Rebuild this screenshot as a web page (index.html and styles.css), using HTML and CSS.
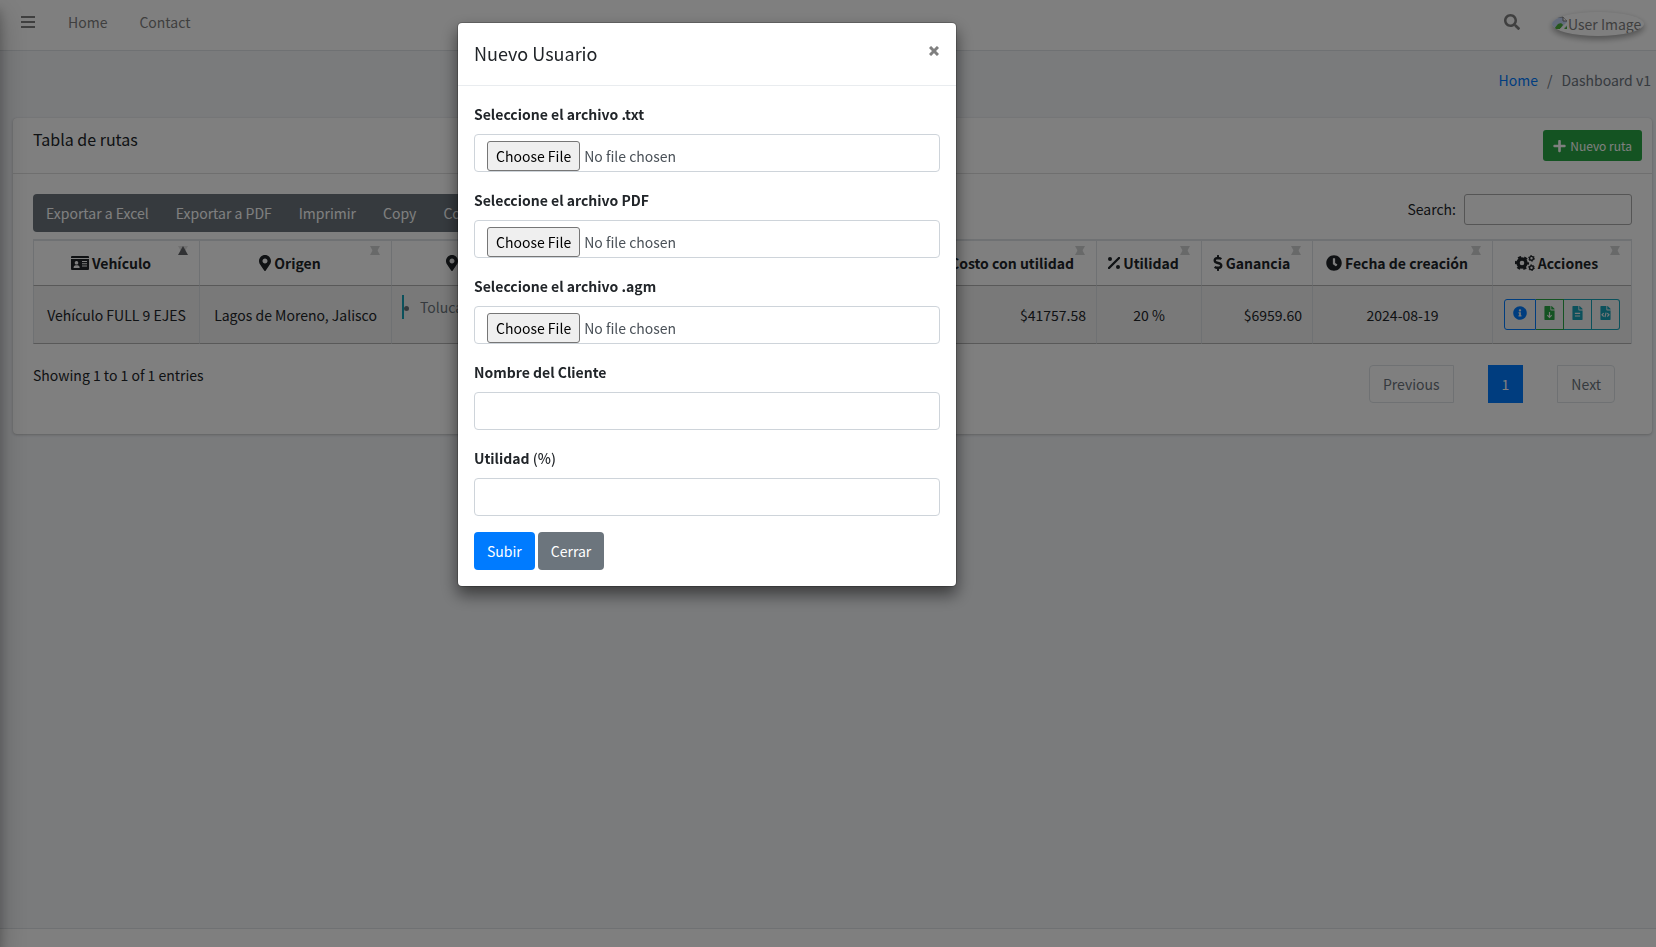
FILE: index.html
```html
<!DOCTYPE html>
<html lang="es">
<head>
<meta charset="utf-8">
<meta name="viewport" content="width=device-width, initial-scale=1">
<title>Tabla de rutas</title>
<link rel="stylesheet" href="styles.css">
</head>
<body>
<svg class="defs" aria-hidden="true">
  <symbol id="pin" viewBox="0 0 384 512"><path d="M172.268 501.67C26.97 291.031 0 269.413 0 192 0 85.961 85.961 0 192 0s192 85.961 192 192c0 77.413-26.97 99.031-172.268 309.67-9.535 13.774-29.93 13.773-39.464 0zM192 272c44.183 0 80-35.817 80-80s-35.817-80-80-80-80 35.817-80 80 35.817 80 80 80z"/></symbol>
  <symbol id="dollar" viewBox="0 0 288 512"><path d="M209.2 233.4l-108-31.6C88.7 198.2 80 186.5 80 173.5c0-16.3 13.2-29.5 29.5-29.5h66.3c12.2 0 24.2 3.7 34.2 10.5 6.1 4.1 14.3 3.1 19.5-2l34.8-34c7.1-6.9 6.1-18.4-1.8-24.5C238 74.8 207.4 64.1 176 64V16c0-8.800-7.200-16-16-16h-32c-8.800 0-16 7.200-16 16v48h-2.500C45.800 64-5.400 118.700.5 183.600c4.200 46.100 39.400 83.600 83.800 96.600l102.500 30c12.500 3.700 21.200 15.300 21.200 28.300 0 16.300-13.200 29.500-29.500 29.500h-66.300C100 368 88 364.300 78 357.500c-6.100-4.100-14.300-3.100-19.500 2l-34.800 34c-7.100 6.900-6.100 18.400 1.800 24.500 24.500 19.200 55.100 29.900 86.500 30v48c0 8.800 7.200 16 16 16h32c8.800 0 16-7.200 16-16v-48.200c46.600-.9 90.300-28.600 105.700-72.700 21.500-61.600-14.600-124.800-72.500-141.700z"/></symbol>
  <symbol id="file" viewBox="0 0 384 512"><path d="M224 136V0H24C10.700 0 0 10.700 0 24v464c0 13.300 10.700 24 24 24h336c13.300 0 24-10.700 24-24V160H248c-13.200 0-24-10.800-24-24z"/><path d="M384 121.900v6.100H256V0h6.100c6.400 0 12.500 2.500 17 7l97.900 98c4.500 4.500 7 10.600 7 16.900z"/></symbol>
  <symbol id="sort" viewBox="0 0 10 9"><path d="M5 0l5 9H0z"/><path d="M0 0h10L5 9z"/></symbol>
</svg>

<aside class="sidebar" aria-hidden="true"></aside>

<div class="wrapper">
  <nav class="navbar">
    <button class="nav-btn" aria-label="Menu"><svg class="ic-bars" viewBox="0 0 14 12"><rect width="14" height="2"/><rect y="5" width="14" height="2"/><rect y="10" width="14" height="2"/></svg></button>
    <a class="nav-link" href="#">Home</a>
    <a class="nav-link" href="#">Contact</a>
    <span class="spacer"></span>
    <button class="nav-btn nav-search" aria-label="Search"><svg class="ic16" viewBox="0 0 512 512"><path d="M505 442.700L405.300 343c-4.500-4.500-10.600-7-17-7H372c27.600-35.300 44-79.700 44-128C416 93.100 322.900 0 208 0S0 93.100 0 208s93.100 208 208 208c48.300 0 92.700-16.400 128-44v16.300c0 6.400 2.500 12.500 7 17l99.700 99.700c9.400 9.400 24.600 9.400 33.900 0l28.300-28.300c9.400-9.400 9.400-24.600.1-34zM208 336c-70.700 0-128-57.200-128-128 0-70.700 57.200-128 128-128 70.700 0 128 57.200 128 128 0 70.700-57.200 128-128 128z"/></svg></button>
    <a class="user" href="#"><svg class="ic16" viewBox="0 0 16 16"><path d="M0 1h11l4 4v7H0z" fill="#c6d7f6"/><path d="M0 1h11l4 4" fill="none" stroke="#777"/><path d="M2 13l4-5c2-1 4-1 5 1l-3 4z" fill="#4caf3a"/><path d="M11 1v4h4" fill="#fff" stroke="#777"/><path d="M8 13l7-7v3l-4 4z" fill="#fff"/><path d="M12 13h3v-3z" fill="#4caf3a"/></svg><span>User Image</span></a>
  </nav>

  <main class="content">
    <ol class="breadcrumb"><li><a href="#">Home</a></li><li class="sep">/</li><li>Dashboard v1</li></ol>

    <section class="card">
      <header class="card-header">
        <h3 class="card-title">Tabla de rutas</h3>
        <button class="btn-new"><svg class="ic-plus" viewBox="0 0 448 512"><path d="M416 208H272V64c0-17.670-14.330-32-32-32h-32c-17.670 0-32 14.330-32 32v144H32c-17.670 0-32 14.330-32 32v32c0 17.670 14.330 32 32 32h144v144c0 17.670 14.330 32 32 32h32c17.670 0 32-14.330 32-32V304h144c17.670 0 32-14.330 32-32v-32c0-17.670-14.330-32-32-32z"/></svg>Nuevo ruta</button>
      </header>
      <div class="card-body">
        <div class="toolbar">
          <div class="dt-buttons"><button>Exportar a Excel</button><button>Exportar a PDF</button><button>Imprimir</button><button>Copy</button><button>Column visibility</button></div>
          <div class="filter"><label for="q">Search:</label><input id="q" type="search"></div>
        </div>

        <table class="table">
          <colgroup><col class="c-veh"><col class="c-ori"><col class="c-des"><col class="c-cos"><col class="c-cu"><col class="c-uti"><col class="c-gan"><col class="c-fec"><col class="c-acc"></colgroup>
          <thead><tr>
            <th><span class="th"><svg class="ic-card" viewBox="0 0 18 14"><path fill-rule="evenodd" d="M1 0h16q1 0 1 1v1H0V1q0-1 1-1zM0 3h18v10q0 1-1 1H1q-1 0-1-1zM5.500 5a1.800 1.800 0 1 0 .01 0zM2.500 12h6.200q0-2.600-2-2.800H4.500q-2 .2-2 2.800zM11 5v1h5V5zM11 7.200v1h5v-1zM11 9.400v1h5v-1z"/></svg>Vehículo</span><svg class="sort sort-asc" viewBox="0 0 10 9"><path class="dim" d="M0 0h10L5 9z"/><path d="M5 0l5 9H0z"/></svg></th>
            <th><span class="th"><svg class="ic-pin"><use href="#pin"/></svg>Origen</span><svg class="sort"><use href="#sort"/></svg></th>
            <th><span class="th th-start"><svg class="ic-pin"><use href="#pin"/></svg>Destinos</span><svg class="sort"><use href="#sort"/></svg></th>
            <th><span class="th"><svg class="ic-dollar"><use href="#dollar"/></svg>Costo</span><svg class="sort"><use href="#sort"/></svg></th>
            <th><span class="th"><svg class="ic-dollar"><use href="#dollar"/></svg>Costo con utilidad</span><svg class="sort"><use href="#sort"/></svg></th>
            <th><span class="th"><svg class="ic-pct" viewBox="0 0 12 12"><path d="M11 1L1 11" stroke="currentColor" stroke-width="2.400" stroke-linecap="round"/><circle cx="2" cy="2" r="2"/><circle cx="10" cy="10" r="2"/></svg>Utilidad</span><svg class="sort"><use href="#sort"/></svg></th>
            <th><span class="th"><svg class="ic-dollar"><use href="#dollar"/></svg>Ganancia</span><svg class="sort"><use href="#sort"/></svg></th>
            <th><span class="th"><svg class="ic16" viewBox="0 0 512 512"><path d="M256 8C119 8 8 119 8 256s111 248 248 248 248-111 248-248S393 8 256 8zm57.100 350.100L224.900 294c-3.100-2.300-4.900-5.900-4.900-9.700V116c0-6.600 5.400-12 12-12h48c6.600 0 12 5.400 12 12v137.700l63.500 46.200c5.400 3.900 6.500 11.400 2.600 16.800l-28.200 38.800c-3.900 5.300-11.400 6.500-16.800 2.600z"/></svg>Fecha de creación</span><svg class="sort"><use href="#sort"/></svg></th>
            <th><span class="th"><svg class="ic-cogs" viewBox="0 0 20 16"><g fill="none" stroke="currentColor"><circle cx="7" cy="8" r="4" stroke-width="3.400"/><circle cx="7" cy="8" r="6" stroke-width="2.200" stroke-dasharray="3.140 3.140" stroke-dashoffset="1.570"/><circle cx="16.500" cy="3.300" r="1.900" stroke-width="1.400"/><circle cx="16.500" cy="3.300" r="2.900" stroke-width="1" stroke-dasharray="1.520 1.520"/><circle cx="16.500" cy="12.700" r="1.900" stroke-width="1.400"/><circle cx="16.500" cy="12.700" r="2.900" stroke-width="1" stroke-dasharray="1.520 1.520"/></g></svg>Acciones</span><svg class="sort"><use href="#sort"/></svg></th>
          </tr></thead>
          <tbody><tr>
            <td>Vehículo FULL 9 EJES</td>
            <td>Lagos de Moreno, Jalisco</td>
            <td class="top"><ul class="stops"><li>Toluca, México</li></ul></td>
            <td class="num">$34797.98</td>
            <td class="num">$41757.58</td>
            <td>20 %</td>
            <td class="num">$6959.60</td>
            <td>2024-08-19</td>
            <td><div class="actions">
              <button class="a-info" aria-label="Información"><svg class="ic14" viewBox="0 0 512 512"><path d="M256 8C119.043 8 8 119.083 8 256c0 136.997 111.043 248 248 248s248-111.003 248-248C504 119.083 392.957 8 256 8zm0 110c23.196 0 42 18.804 42 42s-18.804 42-42 42-42-18.804-42-42 18.804-42 42-42zm56 254c0 6.627-5.373 12-12 12h-88c-6.627 0-12-5.373-12-12v-24c0-6.627 5.373-12 12-12h12v-64h-12c-6.627 0-12-5.373-12-12v-24c0-6.627 5.373-12 12-12h64c6.627 0 12 5.373 12 12v100h12c6.627 0 12 5.373 12 12v24z"/></svg></button><button class="a-down" aria-label="Descargar"><svg class="ic-file" viewBox="0 0 384 512"><use href="#file"/><path class="cut" d="M192 220v190M112 335l80 80 80-80"/></svg></button><button class="a-file" aria-label="Documento"><svg class="ic-file" viewBox="0 0 384 512"><use href="#file"/><path class="cut" d="M96 268h192M96 364h192"/></svg></button><button class="a-file" aria-label="Código"><svg class="ic-file" viewBox="0 0 384 512"><use href="#file"/><path class="cut" d="M125 260l-60 62 60 62M259 260l60 62-60 62M212 240l-40 164"/></svg></button>
            </div></td>
          </tr></tbody>
        </table>

        <div class="table-foot">
          <span>Showing 1 to 1 of 1 entries</span>
          <div class="pages"><button class="prev">Previous</button><button class="current">1</button><button class="next">Next</button></div>
        </div>
      </div>
    </section>
  </main>
  <footer class="footer"></footer>
</div>

<div class="modal">
  <div class="dialog" role="dialog" aria-labelledby="mt">
    <header class="modal-header"><h5 id="mt">Nuevo Usuario</h5><button class="close" aria-label="Cerrar"><svg class="ic-x" viewBox="0 0 10 10"><path d="M1 1l8 8M9 1L1 9"/></svg></button></header>
    <form class="modal-body">
      <div class="group"><label for="f1">Seleccione el archivo .txt</label><input class="control" type="file" id="f1"></div>
      <div class="group"><label for="f2">Seleccione el archivo PDF</label><input class="control" type="file" id="f2"></div>
      <div class="group"><label for="f3">Seleccione el archivo .agm</label><input class="control" type="file" id="f3"></div>
      <div class="group"><label for="f4">Nombre del Cliente</label><input class="control" type="text" id="f4"></div>
      <div class="group"><label for="f5">Utilidad <span class="unit">(%)</span></label><input class="control" type="text" id="f5"></div>
      <div class="form-actions"><button type="button" class="btn primary">Subir</button><button type="button" class="btn secondary">Cerrar</button></div>
    </form>
  </div>
</div>
</body>
</html>
```
FILE: styles.css
```css
*, *::before, *::after { box-sizing: border-box; }
body { margin: 0; font: 14px/24px "Noto Sans CJK JP", "Open Sans", sans-serif; color: #212529; background: #f4f6f9; overflow: hidden; }
button, input { font: inherit; color: inherit; margin: 0; }
a { color: #007bff; text-decoration: none; }
svg { fill: currentColor; flex: none; }
.defs { position: absolute; width: 0; height: 0; }

.sidebar { position: fixed; top: 0; bottom: 0; left: -250px; width: 250px; z-index: 5; box-shadow: 0 14px 28px rgba(0,0,0,.25), 0 10px 10px rgba(0,0,0,.22); }
.wrapper { min-height: 100vh; display: flex; flex-direction: column; }

.navbar { height: 51px; display: flex; align-items: center; padding: 0 12px 6px 5px; background: #fff; border-bottom: 1px solid #dee2e6; color: #7f7f7f; }
.nav-link { padding: 0 16px; color: #7f7f7f; }
.nav-btn { border: 0; background: none; padding: 0 17px 0 16px; display: flex; }
.nav-search { margin-right: 15px; }
.spacer { flex: 1; }
.user { display: flex; align-items: center; overflow: hidden; height: 24px; width: 92px; margin-top: 3px; border-radius: 50%; color: #7f7f7f; white-space: nowrap; box-shadow: 0 3px 6px rgba(0,0,0,.16), 0 3px 6px rgba(0,0,0,.23); }

.content { flex: 1; padding: 17px 4px 18px 13px; }
.breadcrumb { display: flex; justify-content: flex-end; gap: 9px; list-style: none; margin: 0 1px 26px 0; padding: 0; color: #6c757d; }
.card { background: #fff; border-radius: 4px; box-shadow: 0 0 1px rgba(0,0,0,.125), 0 1px 3px rgba(0,0,0,.2); }
.card-header { display: flex; justify-content: space-between; align-items: flex-start; padding: 12px 10px 12px 20px; border-bottom: 1px solid rgba(0,0,0,.125); }
.card-title { margin: 0; font-size: 16px; line-height: 19px; font-weight: 400; }
.btn-new { display: flex; align-items: center; gap: 4px; height: 31px; padding: 0 10px; font-size: 12px; color: #fff; background: #28a745; border: 0; border-radius: 3px; }
.card-body { padding: 20px 20px 31px; }
.toolbar { display: flex; justify-content: space-between; align-items: flex-start; margin-bottom: 7px; }
.dt-buttons { display: flex; border-radius: 4px; overflow: hidden; }
.dt-buttons button { height: 38px; padding: 0 14px 0 13px; border: 0; color: #fff; background: #6c757d; }
.filter { display: flex; align-items: flex-start; gap: 8px; }
.filter label { line-height: 30px; }
.filter input { width: 168px; height: 31px; border: 1px solid #aaa; border-radius: 3px; background: transparent; }

.table { width: 100%; table-layout: fixed; border-collapse: separate; border-spacing: 0; border: 1px solid #dee2e6; border-width: 1px 1px 0 0; white-space: nowrap; }
.c-veh { width: 166px; }
.c-ori { width: 192px; }
.c-cos { width: 180px; }
.c-cu { width: 171px; }
.c-uti { width: 105px; }
.c-gan { width: 111px; }
.c-fec { width: 180px; }
.c-acc { width: 139px; }
.table th { position: relative; height: 46px; padding: 0 22px 0 11px; border: 1px solid #dee2e6; border-width: 1px 0 1px 1px; border-bottom-color: #b3b3b3; font-weight: 700; }
.table td { height: 58px; padding: 0 10px; text-align: center; background: #f2f2f2; border: 1px solid #dee2e6; border-width: 0 0 1px 1px; border-bottom-color: #b3b3b3; }
.table td.num { text-align: right; }
.table td.top { vertical-align: top; padding-top: 9px; }
.th { display: flex; align-items: center; justify-content: center; gap: 3px; }
.th-start { justify-content: flex-start; padding-left: 43px; }
.sort { position: absolute; top: 5px; right: 11px; width: 10px; height: 9px; opacity: .2; }
.sort path { opacity: .6; }
.sort-asc { opacity: .7; }
.sort-asc .dim { opacity: .2; }
.sort-asc path { opacity: 1; }
.stops { margin: 0; padding: 0 0 0 16px; border-left: 2px solid #17a2b8; color: #6c757d; text-align: left; }
.stops li { position: relative; list-style: none; }
.stops li::before { content: ""; position: absolute; left: -16px; top: 11px; width: 5px; height: 5px; border-radius: 50%; background: #6c757d; }
.actions { display: flex; justify-content: center; }
.actions button { display: flex; align-items: center; justify-content: center; height: 31px; width: 28px; padding: 0 0 3px; border: 1px solid; background: none; }
.actions button + button { border-left-width: 0; }
.actions button:last-child { border-radius: 0 3px 3px 0; }
.actions .a-info { width: 32px; color: #007bff; border-radius: 3px 0 0 3px; }
.actions .a-down { color: #28a745; }
.actions .a-file { color: #17a2b8; }
.cut { fill: none; stroke: #f2f2f2; stroke-width: 42; }

.table-foot { display: flex; justify-content: space-between; align-items: flex-start; padding-top: 19px; }
.pages { display: flex; gap: 34px; margin-top: 2px; padding-right: 17px; }
.pages button { height: 38px; padding: 0 13px; border: 1px solid #dee2e6; background: none; color: #6c757d; }
.pages .prev { border-radius: 4px 0 0 4px; }
.pages .next { border-radius: 0 4px 4px 0; }
.pages .current { background: #007bff; border-color: #007bff; color: #fff; }
.footer { height: 19px; background: #fff; border-top: 1px solid #dee2e6; }

.modal { position: fixed; inset: 0; z-index: 10; display: flex; justify-content: center; align-items: flex-start; padding: 22px 242px 0 0; background: rgba(0,0,0,.5); }
.dialog { width: 500px; background: #fff; background-clip: padding-box; border: 1px solid rgba(0,0,0,.2); border-radius: 5px; box-shadow: 0 8px 16px rgba(0,0,0,.5); }
.modal-header { display: flex; justify-content: space-between; align-items: flex-start; min-height: 63px; padding: 16px; border-bottom: 1px solid #e9ecef; }
.modal-header h5 { margin: 0; font-size: 18px; line-height: 28px; font-weight: 400; }
.close { display: flex; padding: 7px 1px; border: 0; background: none; color: #7f7f7f; }
.modal-body { padding: 16px; }
.group { display: flex; flex-direction: column; gap: 8px; margin-bottom: 16px; }
.group label { font-weight: 700; }
.unit { font-weight: 500; }
.control { width: 100%; height: 38px; padding: 6px 12px; border: 1px solid #ced4da; border-radius: 4px; background: #fff; color: #495057; }
.control::file-selector-button { font: inherit; height: 30px; padding: 2px 8px; margin: 0 4px 0 0; border: 1px solid #767676; border-radius: 3px; background: #efefef; color: #000; }
.form-actions { display: flex; gap: 3px; }
.btn { height: 38px; padding: 0 13px; border: 0; border-radius: 4px; color: #fff; }
.primary { background: #007bff; }
.secondary { background: #6c757d; }

.ic16 { width: 16px; height: 16px; }
.ic14 { width: 14px; height: 14px; }
.ic-bars { width: 14px; height: 12px; }
.ic-plus { width: 13px; height: 14px; }
.ic-card { width: 18px; height: 14px; }
.ic-pin { width: 12px; height: 16px; }
.ic-dollar { width: 10px; height: 16px; }
.ic-pct { width: 12px; height: 12px; }
.ic-cogs { width: 20px; height: 16px; }
.ic-file { width: 11px; height: 14px; }
.ic-x { width: 10px; height: 10px; stroke: currentColor; stroke-width: 3; }
```
